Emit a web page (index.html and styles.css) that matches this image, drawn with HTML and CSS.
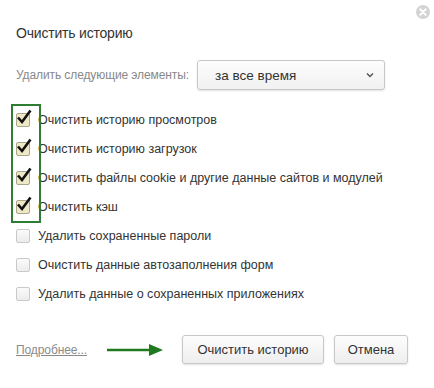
FILE: index.html
```html
<!DOCTYPE html>
<html lang="ru">
<head>
  <meta charset="UTF-8">
  <title>Очистить историю</title>
  <link rel="stylesheet" href="styles.css">
</head>
<body>
  <div class="dialog">
    <!-- кнопка закрытия -->
    <span class="close">
      <svg width="14" height="14" viewBox="0 0 14 14">
        <circle cx="7" cy="7" r="7" fill="#d4d4d4"/>
        <path d="M4.3 4.3 L9.7 9.7 M9.7 4.3 L4.3 9.7" stroke="#fff" stroke-width="2" stroke-linecap="round"/>
      </svg>
    </span>

    <h1>Очистить историю</h1>

    <div class="range">
      <span class="range-label">Удалить следующие элементы:</span>
      <div class="select">
        <span>за все время</span>
        <svg width="8" height="6" viewBox="0 0 8 6"><path d="M1 1.5 L4 4.5 L7 1.5" fill="none" stroke="#555" stroke-width="1.5"/></svg>
      </div>
    </div>

    <div class="items">
      <div class="picked">
        <label class="item"><span class="box checked"><svg width="18" height="18" viewBox="0 0 18 18"><path d="M3 9.5 L7 14 L15.5 2.5" fill="none" stroke="#111" stroke-width="2.6"/></svg></span>Очистить историю просмотров</label>
        <label class="item"><span class="box checked"><svg width="18" height="18" viewBox="0 0 18 18"><path d="M3 9.5 L7 14 L15.5 2.5" fill="none" stroke="#111" stroke-width="2.6"/></svg></span>Очистить историю загрузок</label>
        <label class="item"><span class="box checked"><svg width="18" height="18" viewBox="0 0 18 18"><path d="M3 9.5 L7 14 L15.5 2.5" fill="none" stroke="#111" stroke-width="2.6"/></svg></span>Очистить файлы cookie и другие данные сайтов и модулей</label>
        <label class="item"><span class="box checked"><svg width="18" height="18" viewBox="0 0 18 18"><path d="M3 9.5 L7 14 L15.5 2.5" fill="none" stroke="#111" stroke-width="2.6"/></svg></span>Очистить кэш</label>
      </div>
      <label class="item"><span class="box"></span>Удалить сохраненные пароли</label>
      <label class="item"><span class="box"></span>Очистить данные автозаполнения форм</label>
      <label class="item"><span class="box"></span>Удалить данные о сохраненных приложениях</label>
    </div>

    <div class="footer">
      <a href="#" class="more">Подробнее...</a>
      <svg class="arrow" width="58" height="14" viewBox="0 0 58 14">
        <path d="M0 7 H44" stroke="#1f7a1f" stroke-width="2.4"/>
        <path d="M42 1 L56 7 L42 13 Z" fill="#1f7a1f"/>
      </svg>
      <button class="btn btn-clear">Очистить историю</button>
      <button class="btn btn-cancel">Отмена</button>
    </div>
  </div>
</body>
</html>
```

FILE: styles.css
```css
* { margin: 0; padding: 0; box-sizing: border-box; }
body {
  background: #fff;
  font-family: "Liberation Sans", Arial, sans-serif;
  color: #333;
}
.dialog {
  position: relative;
  width: 434px;
  height: 388px;
  padding: 24px 16px 0 16px;
}
.close {
  position: absolute;
  top: 5px;
  right: 4px;
  line-height: 0;
}
h1 {
  font-size: 14px;
  letter-spacing: -0.2px;
  font-weight: normal;
  line-height: 18px;
  color: #333;
}
.range {
  display: flex;
  align-items: center;
  margin-top: 18px;
}
.range-label {
  font-size: 12px;
  letter-spacing: -0.1px;
  color: #888;
  width: 181px;
  flex-shrink: 0;
  white-space: nowrap;
}
.select {
  width: 188px;
  height: 30px;
  border: 1px solid #c8c8c8;
  border-radius: 3px;
  background: linear-gradient(#fdfdfd, #f1f1f1);
  box-shadow: 0 1px 2px rgba(0,0,0,0.12);
  display: flex;
  align-items: center;
  justify-content: space-between;
  padding: 0 10px 0 17px;
  font-size: 13.5px;
  color: #333;
}
.items {
  margin-top: 15px;
}
.picked {
  position: relative;
}
/* зелёная рамка вокруг отмеченных пунктов */
.picked::before {
  content: "";
  position: absolute;
  left: -5px;
  top: -1px;
  width: 26px;
  height: 115px;
  border: 2px solid #2e7d32;
}
.item {
  display: flex;
  align-items: center;
  height: 29px;
  font-size: 12.5px;
  color: #333;
  white-space: nowrap;
}
.box {
  position: relative;
  width: 14px;
  height: 14px;
  margin-right: 8px;
  border: 1px solid #c9c9c9;
  border-radius: 2px;
  background: linear-gradient(#fafafa, #ececec);
  flex-shrink: 0;
}
.box.checked {
  background: #efe8c6;
  border-color: #a9a68c;
}
.box svg {
  position: absolute;
  left: -2px;
  top: -6px;
}
.footer {
  display: flex;
  align-items: center;
  margin-top: 27px;
}
.more {
  font-size: 12px;
  letter-spacing: -0.1px;
  color: #8a8a8a;
  text-decoration: underline;
  width: 91px;
  white-space: nowrap;
}
.arrow {
  margin-right: 17px;
  flex-shrink: 0;
}
.btn {
  font-family: "Liberation Sans", Arial, sans-serif;
  font-size: 13px;
  color: #333;
  height: 29px;
  border: 1px solid #c8c8c8;
  border-radius: 3px;
  background: linear-gradient(#fdfdfd, #eeeeee);
  box-shadow: 0 1px 2px rgba(0,0,0,0.12);
  white-space: nowrap;
  flex-shrink: 0;
}
.btn-clear {
  width: 142px;
  margin-right: 10px;
}
.btn-cancel {
  width: 74px;
}
```
